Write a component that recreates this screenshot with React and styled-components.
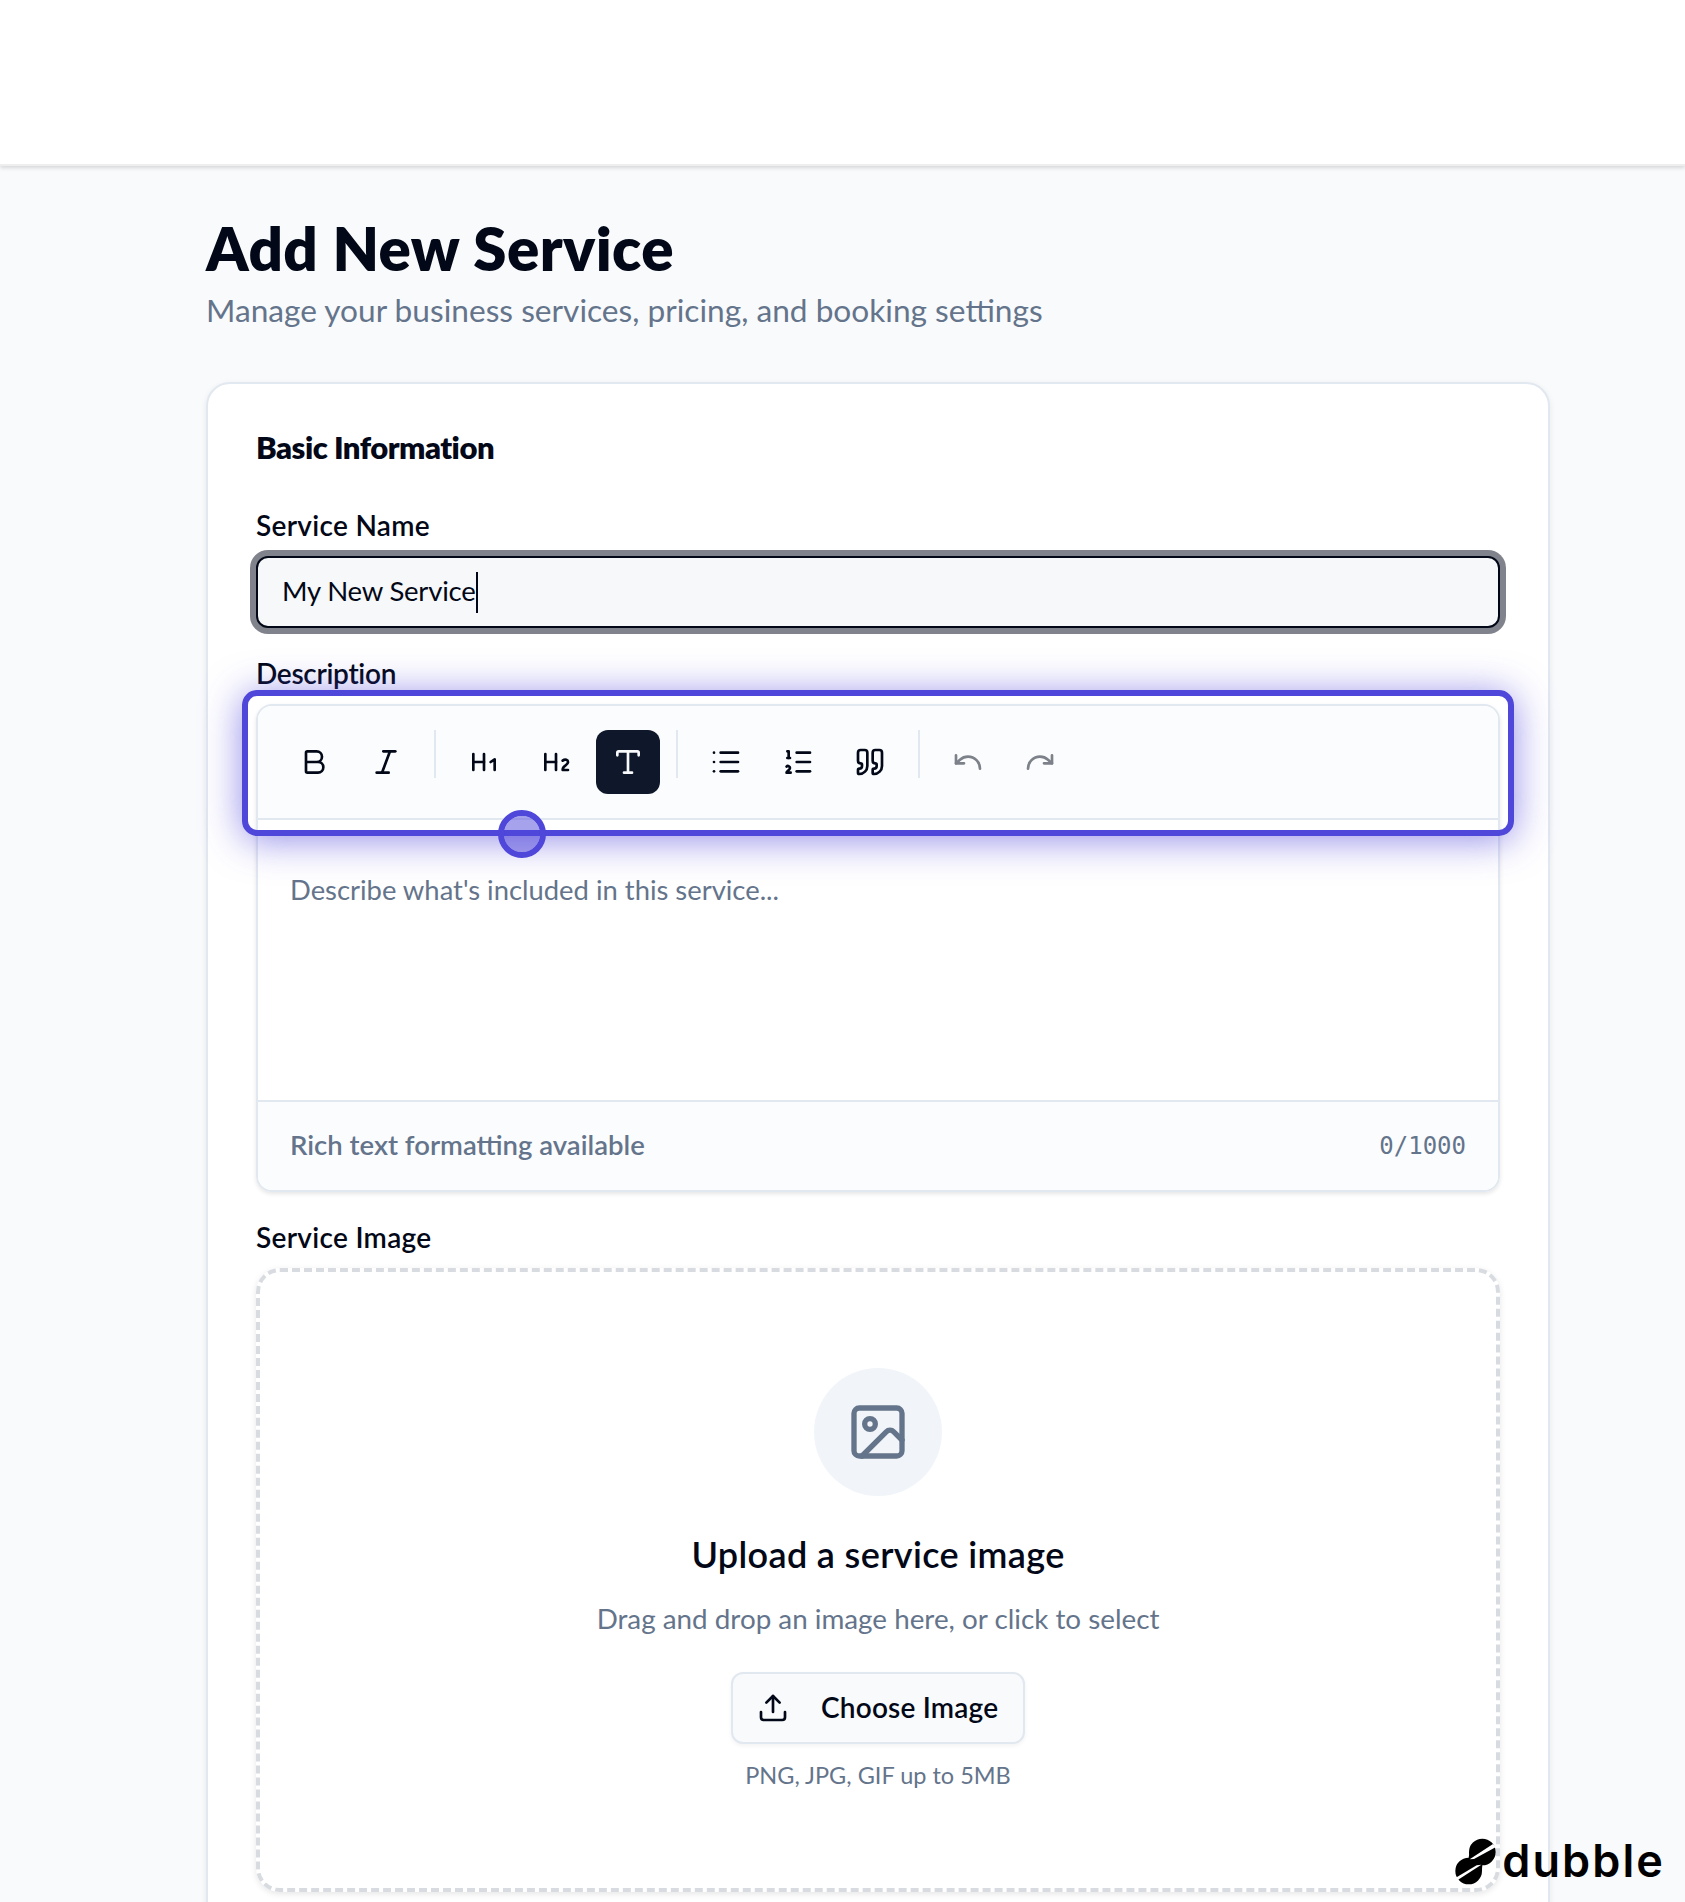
import React from "react"
import styled, { createGlobalStyle } from "styled-components"
import {
  Bold,
  Heading1,
  Heading2,
  Image,
  Italic,
  List,
  ListOrdered,
  Quote,
  Redo,
  Type,
  Undo,
  Upload,
} from "lucide-react"

const GlobalStyle = createGlobalStyle`
  * {
    box-sizing: border-box;
  }

  body {
    margin: 0;
    background: #f9fafc;
    color: #020817;
    font-family: "Lato", sans-serif;
  }
`

const Page = styled.div`
  position: relative;
  height: 1902px;
  overflow: hidden;
`

const Header = styled.header`
  height: 166px;
  background: white;
  border-bottom: 2px solid #eeeeef;
  box-shadow: 0 2px 4px rgba(0, 0, 0, 0.14);
`

const Main = styled.main`
  width: 1550px;
  padding: 47px 0 0 206px;
`

const PageTitle = styled.h1`
  margin: 0;
  font-size: 60px;
  line-height: 70px;
  font-weight: 800;
  letter-spacing: 0.4px;
`

const PageSubtitle = styled.p`
  margin: 3px 0 0;
  font-size: 31.65px;
  line-height: 48px;
  color: #64748b;
`

const Card = styled.section`
  margin-top: 48px;
  height: 1700px;
  padding: 47px 48px;
  background: white;
  border: 2px solid #e2e8f0;
  border-radius: 24px;
  box-shadow: 0 2px 6px rgba(0, 0, 0, 0.08);
`

const SectionTitle = styled.h2`
  margin: 0 0 48px;
  font-size: 31px;
  line-height: 32px;
  font-weight: 800;
  letter-spacing: -0.5px;
`

const Field = styled.div`
  margin-bottom: 31px;
`

const Label = styled.div`
  margin-bottom: 17px;
  font-size: 28px;
  line-height: 28px;
  font-weight: 600;
  letter-spacing: ${props => (props.$tight ? "-0.3px" : "0.3px")};
`

const TextInput = styled.div`
  display: flex;
  align-items: center;
  height: 72px;
  padding: 0 24px;
  background: #f6f8fa;
  border: 2px solid #020817;
  border-radius: 12px;
  box-shadow: 0 0 0 6px #80838b;
  font-size: 27.5px;
  line-height: 40px;
  letter-spacing: -0.2px;
`

const InputValue = styled.span`
  padding-bottom: 2px;
`

const Caret = styled.span`
  width: 2px;
  height: 41px;
  background: #020817;
`

const Editor = styled.div`
  height: 488px;
  display: flex;
  flex-direction: column;
  border: 2px solid #e2e8f0;
  border-radius: 16px;
  box-shadow: 0 2px 4px rgba(0, 0, 0, 0.1);
`

const Toolbar = styled.div`
  position: relative;
  display: flex;
  gap: 8px;
  height: 114px;
  padding: 24px;
  background: #fbfcfe;
  border-bottom: 2px solid #e2e8f0;
  border-radius: 14px 14px 0 0;
`

const ToolButton = styled.div`
  display: flex;
  align-items: center;
  justify-content: center;
  width: 64px;
  height: 64px;
  border-radius: 12px;
  background: ${props => (props.$active ? "#0f172a" : "transparent")};
  color: ${props => (props.$active ? "#f8fafc" : "#020817")};
  opacity: ${props => (props.$disabled ? 0.5 : 1)};
`

const ToolDivider = styled.div`
  width: 2px;
  height: 48px;
  margin: 0 8px;
  background: #e2e8f0;
`

// outline drawn around the step's target
const Spotlight = styled.div`
  position: absolute;
  z-index: 2;
  inset: -16px -16px -18px -16px;
  border: 6px solid #4f46da;
  border-radius: 15px;
  box-shadow: 0 4px 38px rgba(79, 70, 218, 0.62);
`

const ClickMarker = styled.div`
  position: absolute;
  z-index: 3;
  left: 240px;
  top: 104px;
  width: 48px;
  height: 48px;
  border: 6px solid #4f46da;
  border-radius: 50%;
  background: rgba(79, 70, 218, 0.5);
  background-clip: padding-box;
`

const EditorBody = styled.div`
  flex: 1;
  padding: 49px 32px;
  font-size: 27.4px;
  line-height: 42px;
  color: #64748b;
`

const EditorFooter = styled.div`
  display: flex;
  align-items: center;
  justify-content: space-between;
  height: 90px;
  padding: 0 32px 3px;
  background: #fbfcfe;
  border-top: 2px solid #e2e8f0;
  border-radius: 0 0 14px 14px;
  font-size: 27.5px;
  font-weight: 600;
  color: #64748b;
`

const Counter = styled.span`
  padding-top: 3px;
  font-family: "DejaVu Sans Mono", monospace;
  font-size: 24px;
  font-weight: 400;
`

const DropZone = styled.div`
  display: flex;
  flex-direction: column;
  align-items: center;
  height: 624px;
  padding-top: 96px;
  border: 4px dashed #d8dce1;
  border-radius: 24px;
  box-shadow: 0 2px 6px rgba(0, 0, 0, 0.1);
  color: #64748b;
`

const ImageCircle = styled.div`
  display: flex;
  align-items: center;
  justify-content: center;
  width: 128px;
  height: 128px;
  border-radius: 50%;
  background: #f1f5f9;
`

const DropTitle = styled.div`
  margin-top: 30px;
  font-size: 36px;
  line-height: 56px;
  font-weight: 600;
  letter-spacing: 0.35px;
  color: #020817;
`

const DropText = styled.div`
  margin-top: 17px;
  font-size: 27.8px;
  line-height: 40px;
`

const ChooseButton = styled.div`
  display: flex;
  align-items: center;
  gap: 32px;
  width: 294px;
  height: 72px;
  margin-top: 33px;
  padding: 0 24px;
  background: #f8fafc;
  border: 2px solid #e2e8f0;
  border-radius: 12px;
  box-shadow: 0 2px 4px rgba(0, 0, 0, 0.05);
  font-size: 28px;
  line-height: 36px;
  font-weight: 600;
  letter-spacing: 0.2px;
  color: #020817;
  white-space: nowrap;

  span {
    padding-bottom: 3px;
  }
`

const DropHint = styled.div`
  margin-top: 15px;
  font-size: 23.5px;
  line-height: 32px;
`

const Brand = styled.div`
  position: absolute;
  z-index: 5;
  right: 20px;
  bottom: 17px;
  display: flex;
  align-items: center;
  gap: 6px;
  font-family: "Inter", sans-serif;
  font-size: 45px;
  line-height: 48px;
  font-weight: 600;
  letter-spacing: 2.1px;
  color: black;
`

const BrandMark = () => (
  <svg width="42" height="47" viewBox="100 116 126 141">
    <path
      d="M145 158A40 40 0 1 1 185 198Q184 205 184 215A40 40 0 1 1 144 175Q146 168 145 158Z"
      fill="black"
    />
    <path d="M147 180L217 134L226 143L160 179Z" fill="white" />
    <path d="M104 236L168 198L182 196L110 243Z" fill="white" />
  </svg>
)

const App = () => {
  return (
    <Page>
      <GlobalStyle />
      <Header />
      <Main>
        <PageTitle>Add New Service</PageTitle>
        <PageSubtitle>Manage your business services, pricing, and booking settings</PageSubtitle>
        <Card>
          <SectionTitle>Basic Information</SectionTitle>
          <Field>
            <Label>Service Name</Label>
            <TextInput>
              <InputValue>My New Service</InputValue>
              <Caret />
            </TextInput>
          </Field>
          <Field>
            <Label $tight>Description</Label>
            <Editor>
              <Toolbar>
                <ToolButton><Bold size={32} /></ToolButton>
                <ToolButton><Italic size={32} /></ToolButton>
                <ToolDivider />
                <ToolButton><Heading1 size={32} /></ToolButton>
                <ToolButton><Heading2 size={32} /></ToolButton>
                <ToolButton $active><Type size={32} /></ToolButton>
                <ToolDivider />
                <ToolButton><List size={32} /></ToolButton>
                <ToolButton><ListOrdered size={32} /></ToolButton>
                <ToolButton><Quote size={32} /></ToolButton>
                <ToolDivider />
                <ToolButton $disabled><Undo size={32} /></ToolButton>
                <ToolButton $disabled><Redo size={32} /></ToolButton>
                <Spotlight />
                <ClickMarker />
              </Toolbar>
              <EditorBody>Describe what's included in this service...</EditorBody>
              <EditorFooter>
                <span>Rich text formatting available</span>
                <Counter>0/1000</Counter>
              </EditorFooter>
            </Editor>
          </Field>
          <Field>
            <Label>Service Image</Label>
            <DropZone>
              <ImageCircle><Image size={64} /></ImageCircle>
              <DropTitle>Upload a service image</DropTitle>
              <DropText>Drag and drop an image here, or click to select</DropText>
              <ChooseButton>
                <Upload size={32} />
                <span>Choose Image</span>
              </ChooseButton>
              <DropHint>PNG, JPG, GIF up to 5MB</DropHint>
            </DropZone>
          </Field>
        </Card>
      </Main>
      <Brand>
        <BrandMark />
        dubble
      </Brand>
    </Page>
  )
}

export default App
